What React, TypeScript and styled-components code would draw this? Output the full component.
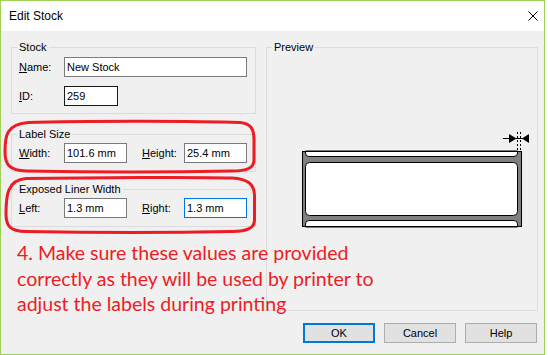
import React from "react";
import styled, { createGlobalStyle } from "styled-components";

const Global = createGlobalStyle`
  html, body { margin: 0; padding: 0; background: #ffffff; }
  body { width: 548px; height: 355px; overflow: hidden; }
  * { box-sizing: border-box; }
`;

const Window = styled.div`
  width: 545px;
  height: 355px;
  border: 1px solid #9fd05a;
  display: flex;
  flex-direction: column;
  background: #f0f0f0;
  font-family: "Liberation Sans", Arial, sans-serif;
  font-size: 11px;
  color: #000;
`;

const TitleBar = styled.div`
  height: 30px;
  flex: none;
  background: #ffffff;
  display: flex;
  align-items: center;
  justify-content: space-between;
  padding: 0 6px 0 8px;
  font-size: 12px;
`;

const Title = styled.span`
  font-family: "Liberation Sans", Arial, sans-serif;
  font-size: 12px;
  color: #000;
`;

const Body = styled.div`
  position: relative;
  flex: 1;
  padding: 10px 6px 0 10px;
  display: flex;
  flex-direction: column;
`;

const Columns = styled.div`
  display: grid;
  grid-template-columns: 245px 272px;
  column-gap: 10px;
  align-items: start;
`;

const LeftCol = styled.div`
  display: flex;
  flex-direction: column;
`;

const Group = styled.fieldset<{ $pt: number; $pb: number; $mt?: number }>`
  margin: ${(p) => p.$mt ?? 0}px 0 0 0;
  padding: ${(p) => p.$pt}px 7px ${(p) => p.$pb}px 7px;
  border: 1px solid #dcdcdc;
  min-width: 0;
  display: flex;
  flex-direction: column;
  gap: 9px;
`;

const PreviewGroup = styled.fieldset`
  margin: 0;
  height: 270px;
  padding: 77px 7px 0 7px;
  border: 1px solid #dcdcdc;
  min-width: 0;
`;

const Drawing = styled.div`
  margin-left: 27px;
  width: 232px;
  height: 100px;
`;

const Legend = styled.legend`
  padding: 0 2px;
  margin-left: -2px;
  line-height: 12px;
  font-size: 11px;
`;

const Row = styled.div`
  display: flex;
  align-items: center;
  height: 20px;
`;

const FieldLabel = styled.label<{ $w: number; $ml?: number }>`
  width: ${(p) => p.$w}px;
  margin-left: ${(p) => p.$ml ?? 0}px;
  flex: none;
`;

const TextBox = styled.input<{ $w: number; $border?: string }>`
  width: ${(p) => p.$w}px;
  height: 20px;
  border: 1px solid ${(p) => p.$border ?? "#7a7a7a"};
  background: #ffffff;
  padding: 0 2px;
  margin: 0;
  font-family: "Liberation Sans", Arial, sans-serif;
  font-size: 11px;
  color: #000;
  outline: none;
  flex: none;
`;

const ButtonRow = styled.div`
  display: flex;
  justify-content: flex-end;
  gap: 9px;
  margin-top: 12px;
  margin-right: 1px;
`;

const Button = styled.button<{ $default?: boolean }>`
  width: 72px;
  height: 20px;
  padding: 0;
  background: #e1e1e1;
  border: ${(p) => (p.$default ? "2px solid #0078d7" : "1px solid #adadad")};
  font-family: "Liberation Sans", Arial, sans-serif;
  font-size: 11px;
  color: #000;
`;

const Annotation = styled.div`
  position: absolute;
  left: 16px;
  top: 209px;
  width: 420px;
  font-family: "Lato", "Open Sans", sans-serif;
  font-size: 19.5px;
  line-height: 25.5px;
  color: #ed1c24;
  white-space: nowrap;
  pointer-events: none;
`;

const Marks = styled.svg`
  position: absolute;
  left: 0;
  top: 0;
  pointer-events: none;
`;

const CloseIcon = () => (
  <svg width="10" height="10" viewBox="0 0 10 10">
    <path d="M0.5 0.5 L9.5 9.5 M9.5 0.5 L0.5 9.5" stroke="#000" strokeWidth="1" />
  </svg>
);

const LabelPreview = () => (
  <svg width="232" height="100" viewBox="0 0 232 100" style={{ display: "block" }}>
    <rect x="1" y="21" width="220" height="76" fill="#808080" />
    <path d="M4.5 21 V23 Q4.5 26.5 8 26.5 H213 Q216.5 26.5 216.5 23 V21 Z" fill="#fff" stroke="#000" />
    <rect x="4.5" y="32.5" width="212" height="53" rx="4" fill="#fff" stroke="#000" />
    <path d="M4.5 97 V94 Q4.5 90.5 8 90.5 H213 Q216.5 90.5 216.5 94 V97 Z" fill="#fff" stroke="#000" />
    <rect x="1.5" y="21.5" width="219" height="75" fill="none" stroke="#000" />
    <line x1="202" y1="8.5" x2="228" y2="8.5" stroke="#000" />
    <polygon points="208,4 208,13 215.5,8.5" fill="#000" />
    <polygon points="221,8.5 228,4 228,13" fill="#000" />
    <line x1="216.5" y1="2" x2="216.5" y2="22" stroke="#000" strokeDasharray="2 2" />
    <line x1="219.5" y1="2" x2="219.5" y2="22" stroke="#000" strokeDasharray="2 2" />
  </svg>
);

export default function App() {
  return (
    <>
      <Global />
      <Window>
        <TitleBar>
          <Title>Edit Stock</Title>
          <CloseIcon />
        </TitleBar>
        <Body>
          <Columns>
            <LeftCol>
              <Group $pt={4} $pb={7}>
                <Legend>Stock</Legend>
                <Row>
                  <FieldLabel $w={45}><u>N</u>ame:</FieldLabel>
                  <TextBox $w={183} value="New Stock" readOnly />
                </Row>
                <Row>
                  <FieldLabel $w={45}><u>I</u>D:</FieldLabel>
                  <TextBox $w={54} $border="#1a1a1a" value="259" readOnly />
                </Row>
              </Group>
              <Group $pt={3} $pb={8} $mt={14}>
                <Legend>Label Size</Legend>
                <Row>
                  <FieldLabel $w={45}><u>W</u>idth:</FieldLabel>
                  <TextBox $w={63} value="101.6 mm" readOnly />
                  <FieldLabel $w={42} $ml={15}><u>H</u>eight:</FieldLabel>
                  <TextBox $w={63} value="25.4 mm" readOnly />
                </Row>
              </Group>
              <Group $pt={3} $pb={8} $mt={11}>
                <Legend>Exposed Liner Width</Legend>
                <Row>
                  <FieldLabel $w={45}><u>L</u>eft:</FieldLabel>
                  <TextBox $w={63} value="1.3 mm" readOnly />
                  <FieldLabel $w={42} $ml={15}><u>R</u>ight:</FieldLabel>
                  <TextBox $w={63} $border="#0078d7" value="1.3 mm" readOnly />
                </Row>
              </Group>
            </LeftCol>
            <PreviewGroup>
              <Legend>Preview</Legend>
              <Drawing>
                <LabelPreview />
              </Drawing>
            </PreviewGroup>
          </Columns>
          <ButtonRow>
            <Button $default>OK</Button>
            <Button>Cancel</Button>
            <Button>Help</Button>
          </ButtonRow>
          <Marks width="543" height="323" viewBox="0 0 543 323">
            <g transform="translate(-1,-31)" fill="none" stroke="#ed1c24" strokeWidth="3" strokeLinecap="round">
              <path d="M28 122.5 C90 120.5 200 121 240 122.5 C251 123.5 254 129 254 140 L254 160 C254 168 247 171 232 171 C160 172.5 80 172 26 171 C10 170.5 5 165 5 152 C5 136 6 124.5 28 122.5 Z" />
              <path d="M26 178.5 C90 177.5 200 177 232 178 C248 179 254 184 254.5 195 L254.5 220 C254.5 228 248 231 232 231.5 C160 233 80 232.5 26 231.5 C10 231 6 226 6 214 C6 196 7 180 26 178.5 Z" />
            </g>
          </Marks>
          <Annotation>
            4. Make sure these values are provided
            <br />
            correctly as they will be used by printer to
            <br />
            adjust the labels during printing
          </Annotation>
        </Body>
      </Window>
    </>
  );
}
